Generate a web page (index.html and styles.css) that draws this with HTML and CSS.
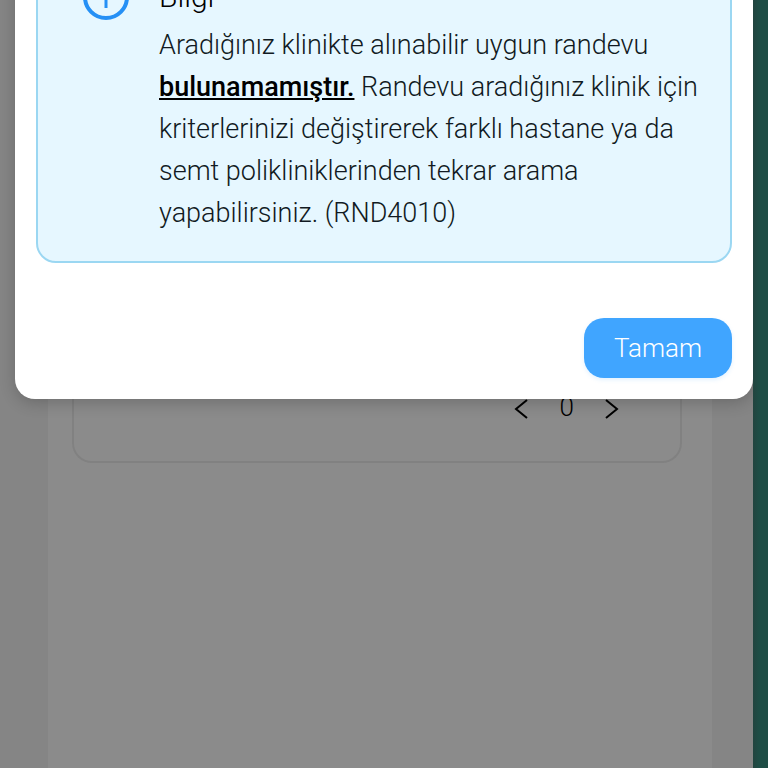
FILE: index.html
```html
<!DOCTYPE html>
<html lang="tr">
<head>
  <meta charset="UTF-8">
  <meta name="viewport" content="width=device-width, initial-scale=1.0">
  <title>Randevu Arama</title>
  <link rel="stylesheet" href="styles.css">
</head>
<body>
  <div class="screen">
    <!-- Search results behind the dialog -->
    <main class="page">
      <section class="results">
        <nav class="pager" aria-label="Sayfalar">
          <button type="button" class="pager-btn" aria-label="Önceki">
            <svg width="16" height="20" viewBox="0 0 16 20"><path d="M13 1 2 10l11 9"/></svg>
          </button>
          <span class="pager-count">0</span>
          <button type="button" class="pager-btn" aria-label="Sonraki">
            <svg width="16" height="20" viewBox="0 0 16 20"><path d="M2 1l11 9-11 9"/></svg>
          </button>
        </nav>
      </section>
    </main>

    <!-- Dialog -->
    <div class="overlay">
      <div class="modal" role="dialog" aria-modal="true" aria-labelledby="info-title">
        <div class="alert">
          <svg class="alert-icon" width="46" height="46" viewBox="0 0 46 46">
            <circle cx="23" cy="23" r="21"/>
            <path class="alert-icon-mark" d="M23 19v15M23 11v4"/>
          </svg>
          <div class="alert-body">
            <h2 class="alert-title" id="info-title">Bilgi</h2>
            <p class="alert-text">Aradığınız klinikte alınabilir uygun randevu <strong>bulunamamıştır.</strong> Randevu aradığınız klinik için kriterlerinizi değiştirerek farklı hastane ya da semt polikliniklerinden tekrar arama yapabilirsiniz. (RND4010)</p>
          </div>
        </div>
        <div class="modal-footer">
          <button type="button" class="btn-primary">Tamam</button>
        </div>
      </div>
    </div>
  </div>
  <div class="edge"></div>
</body>
</html>
```

FILE: styles.css
```css
* {
  box-sizing: border-box;
}
body {
  margin: 0;
  display: flex;
  min-height: 100vh;
  overflow: hidden;
  font-family: Roboto, "Noto Sans", sans-serif;
  font-weight: 300;
  font-size: 26px;
  color: #111a22;
}
button {
  font: inherit;
  border: 0;
  cursor: pointer;
}

.screen {
  position: relative;
  flex: 1;
  padding: 0 41px 0 48px;
  background: #f2f2f2;
}
.edge {
  position: relative;
  width: 15px;
  background: linear-gradient(90deg, #22443f, #1e4d45 6px);
}

/* Results page */
.page {
  min-height: 100vh;
  padding: 0 30px 0 24px;
  background: #fdfdfd;
}
.results {
  padding: 391px 60px 38px 0;
  border: 2px solid #ebebeb;
  border-top: 0;
  border-radius: 0 0 20px 20px;
}
.pager {
  display: flex;
  align-items: center;
  justify-content: flex-end;
  gap: 30px;
  height: 32px;
  line-height: 32px;
  color: #000;
}
.pager-btn {
  display: flex;
  padding: 3px 0 0;
  background: none;
}
.pager-btn svg {
  fill: none;
  stroke: #000;
  stroke-width: 2;
}

/* Dialog */
.overlay {
  position: absolute;
  inset: 0;
  padding-left: 15px;
  background: rgba(0, 0, 0, 0.45);
}
.modal {
  margin-top: -61px;
  padding: 21px;
  background: #fff;
  border-radius: 20px;
  box-shadow: 0 4px 16px rgba(0, 0, 0, 0.2);
}
.alert {
  display: flex;
  align-items: flex-start;
  gap: 30px;
  padding: 12px 24px 27px 45px;
  background: #e6f7ff;
  border: 2px solid #9bd7f2;
  border-radius: 20px;
}
.alert-icon {
  flex: none;
  fill: none;
  stroke: #2590f5;
  stroke-width: 4;
}
.alert-icon-mark {
  stroke-width: 3;
}
.alert-body {
  flex: 1;
}
.alert-title {
  margin: 0 0 4px;
  font-size: 30px;
  font-weight: 300;
  line-height: 46px;
  color: #000;
}
.alert-text {
  margin: 0;
  font-size: 27px;
  line-height: 42px;
}
.alert-text strong {
  font-weight: 500;
  color: #000;
  text-decoration: underline;
}
.modal-footer {
  display: flex;
  justify-content: flex-end;
  padding-top: 55px;
}
.btn-primary {
  padding: 0 30px;
  line-height: 60px;
  color: #fff;
  background: #40a5ff;
  border-radius: 20px;
  box-shadow: 0 2px 4px rgba(64, 165, 255, 0.15);
}
```
